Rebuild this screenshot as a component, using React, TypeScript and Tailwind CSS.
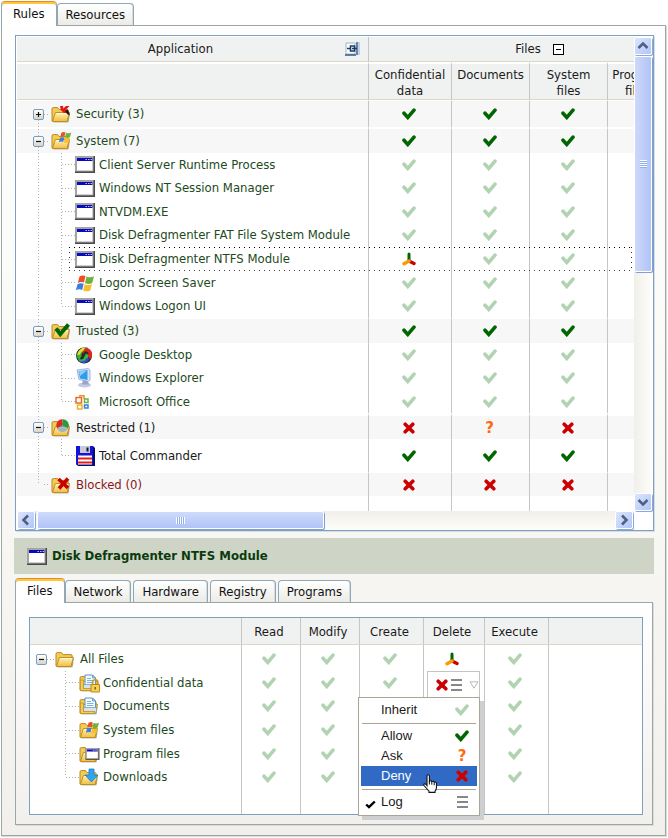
import type { ReactNode } from "react";

type Mark = "on" | "inherit" | "deny" | "ask" | "mixed";

const V_DOTS = "bg-[repeating-linear-gradient(to_bottom,#b4b4ac_0_1px,transparent_1px_3px)]";
const H_DOTS = "bg-[repeating-linear-gradient(to_right,#b4b4ac_0_1px,transparent_1px_3px)]";

function Tick({ color }: { color: string }) {
  return (
    <svg width="14" height="12" viewBox="0 0 14 12" className="block" aria-hidden="true">
      <path d="M2 5.2 5.8 9.4 12 2.2" fill="none" stroke={color} strokeWidth="3.6" strokeLinecap="round" strokeLinejoin="miter" />
    </svg>
  );
}

function Cross() {
  return (
    <svg width="12" height="12" viewBox="0 0 12 12" className="block" aria-hidden="true">
      <path d="M2.2 2.2 9.8 9.8M9.8 2.2 2.2 9.8" stroke="#cc0000" strokeWidth="3.6" strokeLinecap="round" />
    </svg>
  );
}

function Mixed() {
  return (
    <svg width="14" height="14" viewBox="0 0 14 14" className="block" aria-hidden="true">
      <path d="M7 9 12 11.5" stroke="#cc0000" strokeWidth="3.4" strokeLinecap="round" />
      <path d="M7 2v6.5" stroke="#006600" strokeWidth="3" strokeLinecap="round" />
      <path d="M7 9 2 11.7" stroke="#ff9900" strokeWidth="3.4" strokeLinecap="round" />
    </svg>
  );
}

function Question() {
  return (
    <span className="block text-center font-['DejaVu_Sans',sans-serif] text-[15px] leading-4 font-bold text-[#ff6a10]">?</span>
  );
}

function Lines() {
  return (
    <svg width="11" height="12" viewBox="0 0 11 12" className="block" aria-hidden="true">
      <path d="M0 1h11M0 6h11M0 11h11" stroke="#888" strokeWidth="2" />
    </svg>
  );
}

function MarkIcon({ mark }: { mark: Mark }) {
  if (mark === "on") return <Tick color="#006600" />;
  if (mark === "inherit") return <Tick color="#b2d3b2" />;
  if (mark === "deny") return <Cross />;
  if (mark === "ask") return <Question />;
  return <Mixed />;
}

/* ---------- pictograms ---------- */

function Folder({ children }: { children?: ReactNode }) {
  return (
    <svg width="20" height="18" viewBox="0 0 20 18" className="block shrink-0 overflow-visible" aria-hidden="true">
      <defs>
        <linearGradient id="folderFront" x1="0" y1="0" x2="0" y2="1">
          <stop offset="0" stopColor="#fff3ae" />
          <stop offset="1" stopColor="#f0bd45" />
        </linearGradient>
      </defs>
      <path d="M2.500 17.500V5H17l2 4-1.500 8.500z" fill="#6b6450" opacity=".45" />
      <path d="M1 16V4Q1 2.6 2.3 2.6h4.2L8.2 4.6H16q1 0 1 1.2V16z" fill="#f3cb58" stroke="#b98a1e" strokeWidth="1" />
      <path d="M1.4 16.5 4.4 7.500h14l-2.400 9z" fill="url(#folderFront)" stroke="#c08f1f" strokeWidth="1" />
      <path d="M5.2 8.600h11.800" stroke="#fffbe0" strokeWidth="1" />
      {children}
    </svg>
  );
}

function Flag() {
  return (
    <>
      <path d="M3.500 2.600Q6.500.6 9.500 2L8 8.600Q5 7.200 1.800 9z" fill="#e8502a" />
      <path d="M10.500 2.500Q14 4.300 18 2.300L16.200 8.900Q12.500 10.800 9 9z" fill="#6cb33c" />
      <path d="M1.500 10.200Q4.500 8.500 7.700 9.800L6.200 16Q3.200 14.500-.2 16.200z" fill="#3b7fdc" />
      <path d="M8.700 10.200Q12.300 12 16 10.100L14.300 16.500Q10.800 18.200 7.200 16.500z" fill="#f6bf2c" />
    </>
  );
}

function WindowShape() {
  return (
    <>
      <path d="M0 0h20v17H0z" fill="#4a4a4a" />
      <path d="M0 0h18.500v15.500H0z" fill="#a4a4a4" />
      <path d="M2 2h15.500v12.500H2z" fill="#fff" />
      <path d="M2 2h15.500v3H2z" fill="#0a0aba" />
      <path d="M10.500 3.500H12M13 3.500h1.500M15.500 3.500H17" stroke="#b9bdf0" strokeWidth="1.200" />
    </>
  );
}

function WindowIcon() {
  return (
    <svg width="20" height="17" viewBox="0 0 20 17" className="block shrink-0" aria-hidden="true">
      <WindowShape />
    </svg>
  );
}

function Doc() {
  return (
    <>
      <path d="M6 1h7.500l3 3v8H6z" fill="#f4fbff" stroke="#5f95bf" strokeWidth="1" />
      <path d="M13.500 1v3h3z" fill="#a9cdea" stroke="#5f95bf" strokeWidth=".8" />
      <path d="M8 4.500h4M8 6.500h6.500M8 8.500h6.500" stroke="#7db4e2" strokeWidth="1" />
      <path d="M4.500 10.500h13v3.500l-1.500 2.500H4.500z" fill="#d3e4ef" stroke="#7d9db5" strokeWidth=".8" />
      <path d="M1.400 16.500V6h3v8.500h11.400l-1 2z" fill="#f5cd5a" stroke="#c08f1f" strokeWidth=".8" />
    </>
  );
}

function Glyph({ name }: { name: string }) {
  switch (name) {
    case "folder":
      return <Folder />;
    case "security":
      return (
        <Folder>
          <path d="M9 1h3.200v2.500L15 1h3.500l-4 4.200L16.500 8h-3.700L9.800 5z" fill="#e81414" />
          <path d="M14 5.500 17 4.500 19 10.500l-3-1.500z" fill="#1a1a1a" />
        </Folder>
      );
    case "system":
      return (
        <Folder>
          <g transform="translate(8 -1) scale(.68)">
            <Flag />
          </g>
        </Folder>
      );
    case "trusted":
      return (
        <Folder>
          <path d="M5 6.500 9.300 12 17.500 2.500" fill="none" stroke="#006600" strokeWidth="4" />
        </Folder>
      );
    case "restricted":
      return (
        <Folder>
          <path d="M11.500 6.500V.3A6.200 6.200 0 0 0 6 9.600z" fill="#dc2a20" />
          <path d="M11.500 6.500V.3A6.200 6.200 0 0 1 17 9.600z" fill="#2a9a3a" />
          <path d="M11.500 6.500 6 9.600a6.200 6.200 0 0 0 11 0z" fill="#7da3d8" opacity=".7" />
        </Folder>
      );
    case "blocked":
      return (
        <Folder>
          <path d="m7.500 3 9.500 9M17 2.500 8 12.500" stroke="#cc0000" strokeWidth="3.600" />
        </Folder>
      );
    case "confidential":
      return (
        <Folder>
          <Doc />
          <path d="M13.500 11V8.500a2.700 2.700 0 0 1 5.400 0V11" fill="none" stroke="#c9992e" strokeWidth="1.600" />
          <path d="M12 10.500h8.500V18H12z" fill="#f9cf52" stroke="#b98a1e" />
          <path d="M16.200 13v2.500" stroke="#7a5a10" strokeWidth="1.400" />
        </Folder>
      );
    case "documents":
      return (
        <Folder>
          <Doc />
        </Folder>
      );
    case "sysfiles":
      return (
        <Folder>
          <g transform="translate(7 0) scale(.72)">
            <Flag />
          </g>
        </Folder>
      );
    case "progfiles":
      return (
        <Folder>
          <g transform="translate(6.500 3) scale(.7)">
            <WindowShape />
          </g>
        </Folder>
      );
    case "downloads":
      return (
        <Folder>
          <path d="M10 1h5v6h4l-6.500 7L6 7h4z" fill="#2fa4f2" stroke="#1a7ccc" strokeWidth=".8" />
        </Folder>
      );
    case "flag":
      return (
        <svg width="20" height="18" viewBox="-1 0 20 18" className="block shrink-0" aria-hidden="true">
          <Flag />
        </svg>
      );
    case "google":
      return (
        <svg width="20" height="18" viewBox="0 0 20 18" className="block shrink-0" aria-hidden="true">
          <ellipse cx="9" cy="9.500" rx="8" ry="8" fill="#2b2b2b" />
          <path d="M4 14Q-.5 9 4 4.500T13 1.500L9.500 5Q6 6.500 6.500 10z" fill="#38b23c" />
          <path d="M2.500 9Q3 2.500 10 1.500L9.500 4Q6 5 5 8.500z" fill="#f3dc25" />
          <path d="M8 6Q10-.5 15 3.500q4 4 .5 9.500L12.500 10.500Q15 6.500 11.500 5.500T9 9.500z" fill="#e32222" />
          <path d="M4 12.500Q8 15 9.500 10.500L11 7.500 13.500 9Q12.500 17 7.500 16.500T4 12.500z" fill="#3bb543" />
          <path d="M4.500 14.500Q9 17 11.500 12l3 .5Q11.500 18 7.500 17z" fill="#2c4fd8" />
        </svg>
      );
    case "explorer":
      return (
        <svg width="20" height="20" viewBox="0 0 20 20" className="block shrink-0" aria-hidden="true">
          <ellipse cx="9.500" cy="17" rx="6.500" ry="2.600" fill="#c3c9e0" />
          <path d="M8 11h4l2 5.500H7z" fill="#9aa5cc" />
          <path d="M2 2 13.500.5 15 2v10l-1.500 1.500L4 11.500z" fill="#d7e4f5" stroke="#8ba5cf" strokeWidth=".8" />
          <path d="M3.500 3.200 12.500 2v10L5 10.500z" fill="#2f9cf0" />
          <path d="M4 3.600 12 2.600 5 8z" fill="#8fd0ff" />
        </svg>
      );
    case "office":
      return (
        <svg width="20" height="18" viewBox="0 0 20 18" className="block shrink-0" aria-hidden="true">
          <g fill="none" strokeWidth="1.500">
            <path d="M4 2.800h5V6" stroke="#f08b3a" />
            <path d="M1 4.500h5.500V10H1z" stroke="#ee6a1f" />
            <path d="M9.500 6H13v3.500H9.500z" stroke="#6cb33c" />
            <path d="M2.500 12h4.500v4H2.500z" stroke="#f3b02a" />
            <path d="M9.500 12H13v3H9.500z" stroke="#3b7fdc" />
          </g>
        </svg>
      );
    case "floppy":
      return (
        <svg width="20" height="20" viewBox="0 0 20 20" className="block shrink-0" aria-hidden="true">
          <path d="M1 0h17l2 2v18H3l-2-2z" fill="#0c0c60" />
          <path d="M1 0h17v18.500H1z" fill="#1414d8" />
          <path d="M5 0h10v7H5z" fill="#c9c9d8" />
          <path d="M11.500 1.500h2v4h-2z" fill="#101050" />
          <path d="M3 9.500h14v9H3z" fill="#fff" />
          <path d="M3 12.500h14M3 16.500h14" stroke="#e02020" strokeWidth="2" />
        </svg>
      );
    default:
      return <WindowIcon />;
  }
}

/* ---------- tree ---------- */

function Toggle({ open }: { open: boolean }) {
  return (
    <button
      aria-label={open ? "Collapse" : "Expand"}
      className="block h-[11px] w-[11px] shrink-0 rounded-[2px] border border-[#7b9cc0] bg-linear-to-b from-white to-[#d8d4c8]"
    >
      <svg width="9" height="9" viewBox="0 0 9 9" className="block" aria-hidden="true">
        <path d={open ? "M2 4.500h5" : "M2 4.500h5M4.500 2v5"} stroke="#111" strokeWidth="1.200" />
      </svg>
    </button>
  );
}

type Row = {
  label: string;
  icon: string;
  height: string;
  edge?: string;
  tone?: string;
  level: 0 | 1;
  toggle?: "open" | "closed";
  last?: boolean;
  marks: Mark[];
  selected?: boolean;
};

const on3: Mark[] = ["on", "on", "on"];
const in3: Mark[] = ["inherit", "inherit", "inherit"];

const ROWS: Row[] = [
  { label: "Security (3)", icon: "security", height: "h-[26px]", edge: "border-y border-y-white", level: 0, toggle: "closed", marks: on3 },
  { label: "System (7)", icon: "system", height: "h-6", edge: "border-t border-t-white", level: 0, toggle: "open", marks: on3 },
  { label: "Client Server Runtime Process", icon: "window", height: "h-[23px]", level: 1, marks: in3 },
  { label: "Windows NT Session Manager", icon: "window", height: "h-6", level: 1, marks: in3 },
  { label: "NTVDM.EXE", icon: "window", height: "h-[23px]", level: 1, marks: in3 },
  { label: "Disk Defragmenter FAT File System Module", icon: "window", height: "h-6", level: 1, marks: in3 },
  { label: "Disk Defragmenter NTFS Module", icon: "window", height: "h-6", level: 1, marks: ["mixed", "inherit", "inherit"], selected: true },
  { label: "Logon Screen Saver", icon: "flag", height: "h-[23px]", level: 1, marks: in3 },
  { label: "Windows Logon UI", icon: "window", height: "h-6", level: 1, last: true, marks: in3 },
  { label: "Trusted (3)", icon: "trusted", height: "h-6", edge: "border-t border-t-white", level: 0, toggle: "open", marks: on3 },
  { label: "Google Desktop", icon: "google", height: "h-[23px]", level: 1, marks: in3 },
  { label: "Windows Explorer", icon: "explorer", height: "h-6", level: 1, marks: in3 },
  { label: "Microsoft Office", icon: "office", height: "h-[23px]", level: 1, last: true, marks: in3 },
  { label: "Restricted (1)", icon: "restricted", height: "h-[23px]", edge: "border-t-3 border-t-white", tone: "text-[#1a1a1a]", level: 0, toggle: "open", marks: ["deny", "ask", "deny"] },
  { label: "Total Commander", icon: "floppy", height: "h-[33px]", tone: "text-[#1a1a1a]", level: 1, last: true, marks: on3 },
  { label: "Blocked (0)", icon: "blocked", height: "h-[23px]", edge: "border-t border-t-white", tone: "text-[#8a1818]", level: 0, last: true, marks: ["deny", "deny", "deny"] },
];

function AppCell({ row }: { row: Row }) {
  return (
    <div className={`flex items-center pl-4 ${row.height} ${row.tone ?? "text-[#1d4a1d]"}`}>
      <span className="flex w-[11px] shrink-0 flex-col items-center self-stretch">
        <span className={`w-px flex-1 ${row.label.startsWith("Security") ? "" : V_DOTS}`} />
        {row.toggle && <Toggle open={row.toggle === "open"} />}
        <span className={`w-px flex-1 ${row.level === 0 && row.last ? "" : V_DOTS}`} />
      </span>
      {row.level === 0 ? (
        <span className={`mr-px h-px w-1.5 shrink-0 ${H_DOTS}`} />
      ) : (
        <span className="ml-[17px] flex shrink-0 items-center self-stretch">
          <span className={`w-px self-start ${V_DOTS} ${row.last ? "h-1/2" : "h-full"}`} />
          <span className={`h-px w-[13px] ${H_DOTS}`} />
        </span>
      )}
      <Glyph name={row.icon} />
      <span className={`whitespace-nowrap ${row.level === 0 ? "ml-[5px]" : "ml-1"}`}>{row.label}</span>
    </div>
  );
}

function RulesTable() {
  const line = "border-r border-r-[#c6c6c6]";
  const head = "border-b border-b-[#ddd8c6] bg-[#f0f2f1] p-0 font-normal";
  return (
    <table className="w-[653px] table-fixed border-separate border-spacing-0 leading-4">
      <colgroup>
        <col className="w-[352px]" />
        <col className="w-[83px]" />
        <col className="w-[78px]" />
        <col className="w-[78px]" />
        <col className="w-[62px]" />
      </colgroup>
      <thead>
        <tr>
          <th className={`${head} ${line}`}>
            <div className="flex h-6 items-center pr-2">
              <span className="flex-1">Application</span>
              <svg width="16" height="16" viewBox="0 0 16 16" aria-hidden="true">
                <path d="M2 2h9v11H2z" fill="#fff" stroke="#9fb4cc" />
                <path d="M1 14h11M13 1v13" stroke="#2c5a8c" strokeWidth="1.400" />
                <path d="M15 1v13" stroke="#8fb0d4" strokeWidth="1" />
                <path d="M3 7.500h3M6.500 5h4v5h-4zM8 7.500h5" fill="none" stroke="#1c3d66" strokeWidth="1.600" />
              </svg>
            </div>
          </th>
          <th colSpan={4} className={head}>
            <div className="flex items-center justify-center gap-3 pl-10">
              <span>Files</span>
              <button aria-label="Collapse Files" className="flex h-[11px] w-[11px] items-center justify-center border border-black bg-white">
                <span className="h-px w-[5px] bg-black" />
              </button>
            </div>
          </th>
        </tr>
        <tr className="align-top">
          <th className={`${head} ${line} border-t-2 border-t-white`} />
          {["Confidential data", "Documents", "System files"].map((t) => (
            <th key={t} className={`${head} ${line} border-t-2 border-t-white`}>
              <div className="h-[35px] px-1 pt-[3px]">{t}</div>
            </th>
          ))}
          <th className={`${head} border-t-2 border-t-white`}>
            <div className="pt-[3px] pr-1">Program files</div>
          </th>
        </tr>
      </thead>
      <tbody>
        {ROWS.map((row) => {
          const band = row.level === 0 ? "bg-[#f7f7f7]" : "bg-white";
          return (
            <tr key={row.label} className="relative">
              <td className={`p-0 ${line} ${band} ${row.edge ?? ""}`}>
                <AppCell row={row} />
                {row.selected && (
                  <span className="pointer-events-none absolute inset-y-0 left-13 w-[563px]">
                    <span className="flex h-full flex-col bg-[repeating-linear-gradient(to_bottom,#333_0_1px,transparent_1px_5px),repeating-linear-gradient(to_bottom,#333_0_1px,transparent_1px_5px)] bg-[length:1px_100%] bg-[position:left,right] bg-no-repeat">
                      <span className="h-px bg-[repeating-linear-gradient(to_right,#000_0_1px,transparent_1px_5px)]" />
                      <span className="flex-1" />
                      <span className="h-px bg-[repeating-linear-gradient(to_right,#444_0_1px,transparent_1px_5px)]" />
                    </span>
                  </span>
                )}
              </td>
              {row.marks.map((m, i) => (
                <td key={i} className={`p-0 pr-0.5 ${line} ${band} ${row.edge ?? ""}`}>
                  <div className="flex justify-center">
                    <MarkIcon mark={m} />
                  </div>
                </td>
              ))}
              <td className={`p-0 ${band} ${row.edge ?? ""}`} />
            </tr>
          );
        })}
        <tr>
          {[0, 1, 2, 3].map((i) => (
            <td key={i} className={`h-[15px] p-0 ${line}`} />
          ))}
          <td />
        </tr>
      </tbody>
    </table>
  );
}

/* ---------- scroll bars ---------- */

function ScrollButton({ label, d }: { label: string; d: string }) {
  return (
    <button
      aria-label={label}
      className="flex h-[18px] w-[18px] shrink-0 items-center justify-center rounded-[2px] border border-white bg-linear-to-br from-[#dbe5fd] to-[#b2c5f4] shadow-[1px_1px_0_#8aa8dc]"
    >
      <svg width="12" height="12" viewBox="0 0 12 12" aria-hidden="true">
        <path d={d} fill="none" stroke="#4d6185" strokeWidth="2.600" />
      </svg>
    </button>
  );
}

const thumb = "flex items-center justify-center rounded-[2px] border border-white";

function RulesPane() {
  return (
    <section className="border border-[#7f9fc0] bg-white p-px pb-0 shadow-[1px_1px_0_#d2dfea]">
      <div className="flex">
        <div className="min-w-0 flex-1 overflow-hidden">
          <RulesTable />
        </div>
        <div className="flex w-[18px] shrink-0 flex-col bg-linear-to-r from-[#f1efe9] to-[#fdfdfa]">
          <ScrollButton label="Scroll up" d="M1.500 8 6 3.500 10.500 8" />
          <div className={`${thumb} mt-px h-[216px] bg-linear-to-r from-[#cdd9fb] to-[#b2c4f6] shadow-[1px_1px_0_#7f9fd4]`}>
            <span className="h-2 w-[7px] bg-[repeating-linear-gradient(to_bottom,#fff_0_1px,#8fb0f0_1px_2px)]" />
          </div>
          <span className="flex-1" />
          <ScrollButton label="Scroll down" d="M1.500 4 6 8.500 10.500 4" />
        </div>
      </div>
      <div className="flex pr-[19px]">
        <div className="flex h-[19px] flex-1 bg-linear-to-b from-[#f1efe9] to-[#fdfdfa]">
          <ScrollButton label="Scroll left" d="M8 1.500 3.500 6 8 10.500" />
          <div className={`${thumb} ml-0.5 h-[18px] w-[287px] bg-linear-to-b from-[#cfdbfd] to-[#b0c3f6] shadow-[1px_1px_0_#7f9fd4]`}>
            <span className="h-[7px] w-[9px] bg-[repeating-linear-gradient(to_right,#fff_0_1px,#8fb0f0_1px_2px)]" />
          </div>
          <span className="flex-1" />
          <ScrollButton label="Scroll right" d="M4 1.500 8.500 6 4 10.500" />
        </div>
      </div>
    </section>
  );
}

/* ---------- tabs ---------- */

function Tab({ label, active = false }: { label: string; active?: boolean }) {
  return active ? (
    <button
      role="tab"
      aria-selected="true"
      className="relative z-10 -mr-0.5 -mb-px h-[25px] rounded-t-[4px] border border-b-0 border-[#91a7b4] border-t-[#e68b2c] bg-white px-[11px] leading-5 text-[#111] shadow-[inset_0_2px_0_#ffc73c]"
    >
      {label}
    </button>
  ) : (
    <button
      role="tab"
      aria-selected="false"
      className="h-[22px] rounded-t-[4px] border border-b-0 border-[#91a7b4] bg-linear-to-b from-white to-[#ecebe6] px-2 leading-5 text-[#111] shadow-[inset_-1px_0_0_#d6dde0]"
    >
      {label}
    </button>
  );
}

/* ---------- details ---------- */

function MenuItem({ label, icon, active = false, checked = false }: { label: string; icon: ReactNode; active?: boolean; checked?: boolean }) {
  return (
    <button
      role="menuitem"
      className={`flex h-5 w-full items-center pr-2 pl-1 text-left ${active ? "bg-[#316ac5] text-white" : "text-[#1a1a1a]"}`}
    >
      <span className="w-4 pt-1">
        {checked && (
          <svg width="11" height="9" viewBox="0 0 11 9" aria-hidden="true">
            <path d="M1.200 4.500 4 7.200 9.800 1.500" fill="none" stroke="#000" strokeWidth="2.400" />
          </svg>
        )}
      </span>
      <span className="flex-1">{label}</span>
      <span className="flex w-3.5 justify-center">{icon}</span>
    </button>
  );
}

function Hand() {
  return (
    <svg width="15" height="19" viewBox="0 0 15 19" className="pointer-events-none absolute top-[76px] left-16" aria-hidden="true">
      <path
        d="M4 11.500V2q0-1.300 1.200-1.300T6.400 2v5.200q1.800-1 2.400.3 1.700-.7 2.400.6 1.900-.5 2.300 1.200v4q0 2.200-1.500 3.800v1.300H6v-1.300L1 11.500Q.300 10 1.700 9.700q1.200 0 2.300 1.800z"
        fill="#fff"
        stroke="#111"
        strokeWidth="1.100"
      />
      <path d="M6.400 7v3.500M8.800 7.700v3M11.200 8.300v3" stroke="#111" strokeWidth="1" />
    </svg>
  );
}

function DeleteMenu() {
  return (
    <div className="absolute top-0 right-1 w-[53px]">
      <button aria-haspopup="menu" aria-expanded="true" aria-label="Delete: Deny, logged" className="flex h-[27px] w-full items-center gap-[3px] border border-[#c4c4c4] bg-white pl-2">
        <Cross />
        <Lines />
        <svg width="10" height="8" viewBox="0 0 10 8" className="ml-1" aria-hidden="true">
          <path d="M1 .8h8L5 7.200z" fill="#fff" stroke="#b8b8b8" />
        </svg>
      </button>
      <div role="menu" className="absolute top-[26px] right-0 z-20 w-[122px] border border-[#a9a698] bg-white px-0.5 pt-0.5 pb-[3px] font-['Liberation_Sans',Arial,sans-serif] text-[13px] leading-4 shadow-[4px_4px_0_#cfcfcf]">
        <MenuItem label="Inherit" icon={<Tick color="#b2d3b2" />} />
        <hr className="mx-px mt-[3px] mb-0.5 border-[#a9a698]" />
        <MenuItem label="Allow" icon={<Tick color="#006600" />} />
        <MenuItem label="Ask" icon={<Question />} />
        <MenuItem label="Deny" icon={<Cross />} active />
        <hr className="mx-px mt-[3px] mb-0.5 border-[#a9a698]" />
        <MenuItem label="Log" icon={<Lines />} checked />
        <Hand />
      </div>
    </div>
  );
}

const FILES = [
  { label: "All Files", icon: "folder", height: "h-6" },
  { label: "Confidential data", icon: "confidential", height: "h-[23px]" },
  { label: "Documents", icon: "documents", height: "h-6" },
  { label: "System files", icon: "sysfiles", height: "h-6" },
  { label: "Program files", icon: "progfiles", height: "h-[23px]" },
  { label: "Downloads", icon: "downloads", height: "h-6" },
];

function FilesTable() {
  const cols = ["Read", "Modify", "Create", "Delete", "Execute"];
  const line = "border-r border-r-[#c6c6c6]";
  const head = "h-[27px] border-b border-b-[#ddd8c6] bg-[#f0f2f1] p-0 font-normal";
  return (
    <div className="border border-[#7f9fc0] bg-white">
      <table className="w-full table-fixed border-separate border-spacing-0 leading-4">
        <colgroup>
          <col className="w-[212px]" />
          <col className="w-[59px]" />
          <col className="w-[59px]" />
          <col className="w-16" />
          <col className="w-[61px]" />
          <col className="w-16" />
          <col />
        </colgroup>
        <thead>
          <tr>
            <th className={`${head} ${line}`} />
            {cols.map((c) => (
              <th key={c} className={`${head} ${line} pt-0.5 pr-1`}>{c}</th>
            ))}
            <th className={head} />
          </tr>
        </thead>
        <tbody>
          <tr>
            {[0, 1, 2, 3, 4, 5].map((i) => (
              <td key={i} className={`h-0.5 p-0 ${line}`} />
            ))}
          </tr>
          {FILES.map((f, r) => (
            <tr key={f.label}>
              <td className={`p-0 text-[#1d4a1d] ${line}`}>
                <div className={`flex items-center ${f.height}`}>
                  {r === 0 ? (
                    <>
                      <span className="ml-1.5"><Toggle open /></span>
                      <span className={`mr-px h-px w-[7px] ${H_DOTS}`} />
                    </>
                  ) : (
                    <span className="ml-[35px] flex items-center self-stretch">
                      <span className={`w-px self-start ${V_DOTS} ${r === 5 ? "h-1/2" : "h-full"}`} />
                      <span className={`h-px w-[13px] ${H_DOTS}`} />
                    </span>
                  )}
                  <Glyph name={f.icon} />
                  <span className={r === 0 ? "ml-[5px]" : "ml-1"}>{f.label}</span>
                </div>
              </td>
              {cols.map((c, i) => (
                <td key={c} className={`p-0 ${line}`}>
                  <div className={`relative flex items-center justify-center pr-1 ${f.height}`}>
                    {i === 3 && r === 1 ? <DeleteMenu /> : <MarkIcon mark={i === 3 && r === 0 ? "mixed" : "inherit"} />}
                  </div>
                </td>
              ))}
              <td />
            </tr>
          ))}
          <tr>
            {[0, 1, 2, 3, 4, 5].map((i) => (
              <td key={i} className={`h-[25px] p-0 ${line}`} />
            ))}
          </tr>
        </tbody>
      </table>
    </div>
  );
}

export default function App() {
  return (
    <main className="bg-white pt-px pr-0.5 pb-0.5 pl-px font-['DejaVu_Sans_Condensed','DejaVu_Sans',sans-serif] text-[13px] text-[#1a1a1a]">
      <div role="tablist" className="flex items-end gap-0.5">
        <Tab label="Rules" active />
        <Tab label="Resources" />
      </div>
      <div className="border border-[#9da5a5] bg-linear-to-b from-[#fefefe] via-[#f9f9f5] to-[#f2f0ec] pt-[9px] pr-[11px] pb-2.5 pl-[13px] shadow-[1px_1px_0_#d9dcd9]">
        <RulesPane />
        <h2 className="-ml-px mt-[7px] flex h-9 items-center gap-[5px] bg-[#ced5c7] pl-[13px] text-[13px] font-bold text-[#0b3a0b]">
          <WindowIcon />
          Disk Defragmenter NTFS Module
        </h2>
        <div role="tablist" className="mt-1 flex items-end gap-0.5">
          <Tab label="Files" active />
          <Tab label="Network" />
          <Tab label="Hardware" />
          <Tab label="Registry" />
          <Tab label="Programs" />
        </div>
        <div className="mr-px border border-[#9da5a5] bg-linear-to-b from-white to-[#f2f0ec] pt-3.5 pr-[9px] pb-[9px] pl-[13px] shadow-[1px_1px_0_#d9dcd9]">
          <FilesTable />
        </div>
      </div>
    </main>
  );
}
